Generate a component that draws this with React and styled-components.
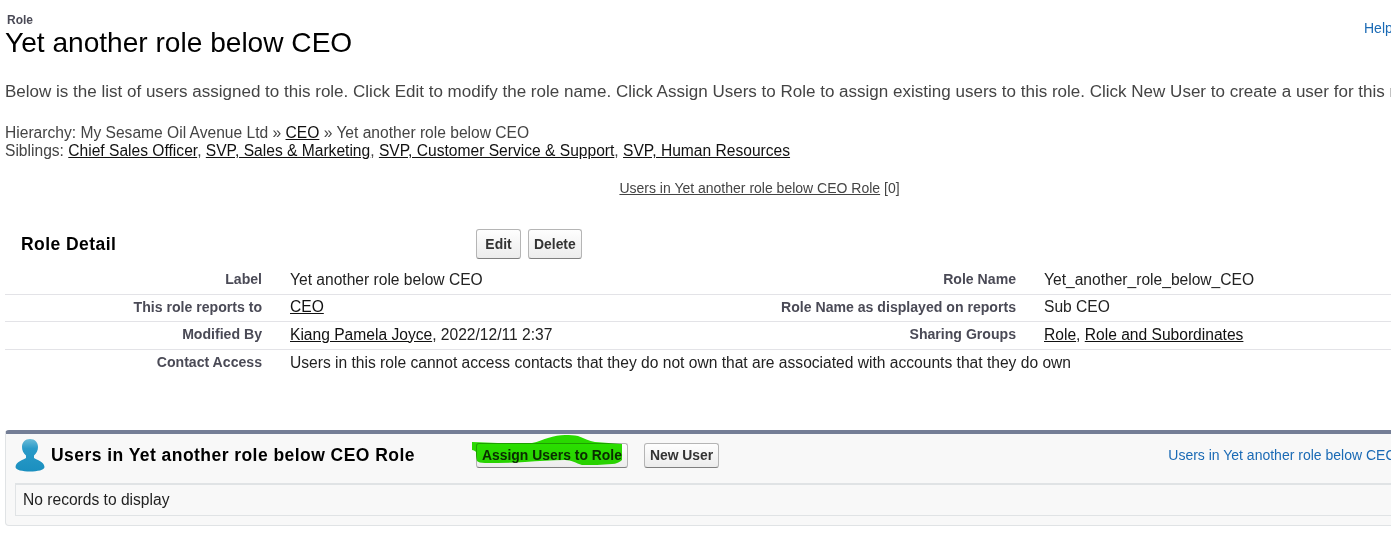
import React from "react";
import styled, { createGlobalStyle } from "styled-components";

const GlobalStyle = createGlobalStyle`
  html, body {
    margin: 0;
    padding: 0;
    background: #fff;
    overflow: hidden;
  }
  body {
    font-family: "Liberation Sans", Arial, sans-serif;
    color: #222;
  }
`;

const Page = styled.div`
  width: 1391px;
  height: 545px;
  overflow: hidden;
  padding: 14px 0 0 5px;
  box-sizing: border-box;
`;

const Inner = styled.div`
  width: 1480px;
`;

const TopRow = styled.div`
  display: flex;
  justify-content: space-between;
  align-items: flex-start;
  width: 1386px;
`;

const TitleBlock = styled.div`
  display: flex;
  flex-direction: column;
`;

const Crumb = styled.div`
  font-size: 12px;
  line-height: 13px;
  font-weight: bold;
  color: #4a4a56;
  padding-left: 2px;
`;

const Title = styled.h1`
  margin: 0;
  font-size: 28.1px;
  line-height: 32px;
  font-weight: normal;
  color: #000;
`;

const HelpLink = styled.a`
  font-size: 14px;
  line-height: 16px;
  margin-top: 6px;
  width: 27px;
  overflow: hidden;
  color: #1a6ab5;
`;

const Intro = styled.p`
  margin: 23px 0 0;
  font-size: 17.03px;
  line-height: 20px;
  color: #444;
  white-space: nowrap;
`;

const Trail = styled.div`
  margin-top: 22px;
  font-size: 15.6px;
  line-height: 18px;
  color: #444;
`;

const TextLink = styled.a`
  color: #111;
  text-decoration: underline;
`;

const CountRow = styled.div`
  width: 1509px;
  margin-top: 20px;
  text-align: center;
  font-size: 14px;
  line-height: 16px;
  color: #444;
`;

const CountLink = styled.a`
  color: #444;
  text-decoration: underline;
`;

const DetailHead = styled.div`
  display: flex;
  align-items: center;
  height: 30px;
  margin-top: 33px;
`;

const SectionTitle = styled.h2`
  margin: 0;
  font-size: 17.5px;
  line-height: 20px;
  letter-spacing: 0.45px;
  font-weight: bold;
  color: #000;
  width: ${(props) => props.$width}px;
  padding-left: ${(props) => props.$indent}px;
  box-sizing: border-box;
  flex-shrink: 0;
`;

const Buttons = styled.div`
  display: flex;
  gap: ${(props) => props.$gap}px;
  position: relative;
`;

const Button = styled.button`
  height: ${(props) => props.$height}px;
  min-width: 45px;
  padding: 0 5px;
  border: 1px solid #b5b5b5;
  border-bottom-color: #7f7f7f;
  border-radius: 3px;
  background: linear-gradient(#fefefe, #ececec);
  font-family: "Liberation Sans", Arial, sans-serif;
  font-size: 13.92px;
  font-weight: bold;
  color: #333;
`;

const DetailTable = styled.div`
  margin-top: 8px;
`;

const DetailRow = styled.div`
  display: grid;
  grid-template-columns: 257px 28px 426px 300px 28px 1fr;
  height: ${(props) => props.$height}px;
  padding-bottom: 2px;
  box-sizing: border-box;
  align-items: center;
  border-bottom: ${(props) => (props.$last ? "none" : "1px solid #e3e3e7")};
  width: 1386px;
`;

const FieldLabel = styled.div`
  grid-column: ${(props) => props.$col};
  font-size: 14.1px;
  font-weight: bold;
  color: #4a4a56;
  text-align: right;
  padding-bottom: 1px;
`;

const FieldValue = styled.div`
  grid-column: ${(props) => props.$col};
  font-size: 15.6px;
  color: #222;
  white-space: nowrap;
`;

const Panel = styled.section`
  width: 1480px;
  height: 96px;
  margin-top: 53px;
  box-sizing: border-box;
  background: #f8f8f8;
  border: 1px solid #e0e3e5;
  border-top: 4px solid #747e96;
  border-radius: 4px;
  padding: 0 9px;
`;

const PanelHead = styled.div`
  display: flex;
  align-items: center;
  height: 49px;
  padding-bottom: 7px;
  box-sizing: border-box;
`;

const PersonIcon = styled.svg`
  width: 30px;
  height: 34px;
  margin-right: 6px;
  flex-shrink: 0;
`;

const PanelLink = styled.a`
  margin-left: 449px;
  font-size: 14px;
  color: #1a6ab5;
  white-space: nowrap;
`;

const Empty = styled.div`
  height: 33px;
  box-sizing: border-box;
  border: 1px solid #e0e3e5;
  border-top-width: 2px;
  padding-left: 7px;
  font-size: 15.6px;
  line-height: 29px;
  color: #222;
`;

const Scribble = styled.svg`
  position: absolute;
  left: -4px;
  top: -9px;
  width: 152px;
  height: 33px;
  pointer-events: none;
  mix-blend-mode: multiply;
`;

export default function App() {
  return (
    <Page>
      <GlobalStyle />
      <Inner>
        <TopRow>
          <TitleBlock>
            <Crumb>Role</Crumb>
            <Title>Yet another role below CEO</Title>
          </TitleBlock>
          <HelpLink>Help</HelpLink>
        </TopRow>
        <Intro>
          Below is the list of users assigned to this role. Click Edit to modify the role name. Click Assign Users to Role to assign existing users to this role. Click New User to create a user for this role.
        </Intro>
        <Trail>
          Hierarchy: My Sesame Oil Avenue Ltd » <TextLink>CEO</TextLink> » Yet another role below CEO
          <br />
          Siblings: <TextLink>Chief Sales Officer</TextLink>, <TextLink>SVP, Sales &amp; Marketing</TextLink>, <TextLink>SVP, Customer Service &amp; Support</TextLink>, <TextLink>SVP, Human Resources</TextLink>
        </Trail>
        <CountRow>
          <CountLink>Users in Yet another role below CEO Role</CountLink> [0]
        </CountRow>
        <DetailHead>
          <SectionTitle $width={471} $indent={16}>Role Detail</SectionTitle>
          <Buttons $gap={7}>
            <Button $height={30}>Edit</Button>
            <Button $height={30}>Delete</Button>
          </Buttons>
        </DetailHead>
        <DetailTable>
          <DetailRow $height={28}>
            <FieldLabel $col={1}>Label</FieldLabel>
            <FieldValue $col={3}>Yet another role below CEO</FieldValue>
            <FieldLabel $col={4}>Role Name</FieldLabel>
            <FieldValue $col={6}>Yet_another_role_below_CEO</FieldValue>
          </DetailRow>
          <DetailRow $height={27}>
            <FieldLabel $col={1}>This role reports to</FieldLabel>
            <FieldValue $col={3}><TextLink>CEO</TextLink></FieldValue>
            <FieldLabel $col={4}>Role Name as displayed on reports</FieldLabel>
            <FieldValue $col={6}>Sub CEO</FieldValue>
          </DetailRow>
          <DetailRow $height={28}>
            <FieldLabel $col={1}>Modified By</FieldLabel>
            <FieldValue $col={3}><TextLink>Kiang Pamela Joyce</TextLink>, 2022/12/11 2:37</FieldValue>
            <FieldLabel $col={4}>Sharing Groups</FieldLabel>
            <FieldValue $col={6}><TextLink>Role</TextLink>, <TextLink>Role and Subordinates</TextLink></FieldValue>
          </DetailRow>
          <DetailRow $height={27} $last>
            <FieldLabel $col={1}>Contact Access</FieldLabel>
            <FieldValue $col={3}>Users in this role cannot access contacts that they do not own that are associated with accounts that they do own</FieldValue>
          </DetailRow>
        </DetailTable>
        <Panel>
          <PanelHead>
            <PersonIcon viewBox="0 0 30 34">
              <defs>
                <linearGradient id="person" x1="0" y1="0" x2="0" y2="1">
                  <stop offset="0" stopColor="#6bbcd8" />
                  <stop offset="0.3" stopColor="#2a9ac8" />
                  <stop offset="1" stopColor="#1a8fbf" />
                </linearGradient>
              </defs>
              <path
                fill="url(#person)"
                d="M15 1c5 0 8 3.5 8 8 0 3.5-1.5 6.5-4 8.5v2.5c3 2.5 10 3 10.5 9 0 3-7 4.5-14.5 4.5S.5 32 .5 29c.5-6 7.5-6.5 10.5-9v-2.5C8.5 15.5 7 12.5 7 9c0-4.5 3-8 8-8z"
              />
            </PersonIcon>
            <SectionTitle $width={425} $indent={0}>Users in Yet another role below CEO Role</SectionTitle>
            <Buttons $gap={16}>
              <Button $height={25}>Assign Users to Role</Button>
              <Button $height={25}>New User</Button>
              <Scribble viewBox="0 0 152 33">
                <path
                  fill="#2ae000"
                  d="M0 8 L26 9 L60 9 C66 8 72 5 76 4 C82 2 88 1 93 1 C98 1 102 1 106 2 C112 4 117 7 123 8 C132 9 141 9 150 10 L150 26 C148 28 144 30 140 30 C130 31 120 31 110 31 C104 29 99 26 93 26 C80 26 66 27 53 28 C40 29 26 29 13 29 C9 29 6 28 5 27 C4 24 4 21 4 18 C3 17 2 16 0 16 Z"
                />
              </Scribble>
            </Buttons>
            <PanelLink>Users in Yet another role below CEO Role Help</PanelLink>
          </PanelHead>
          <Empty>No records to display</Empty>
        </Panel>
      </Inner>
    </Page>
  );
}
